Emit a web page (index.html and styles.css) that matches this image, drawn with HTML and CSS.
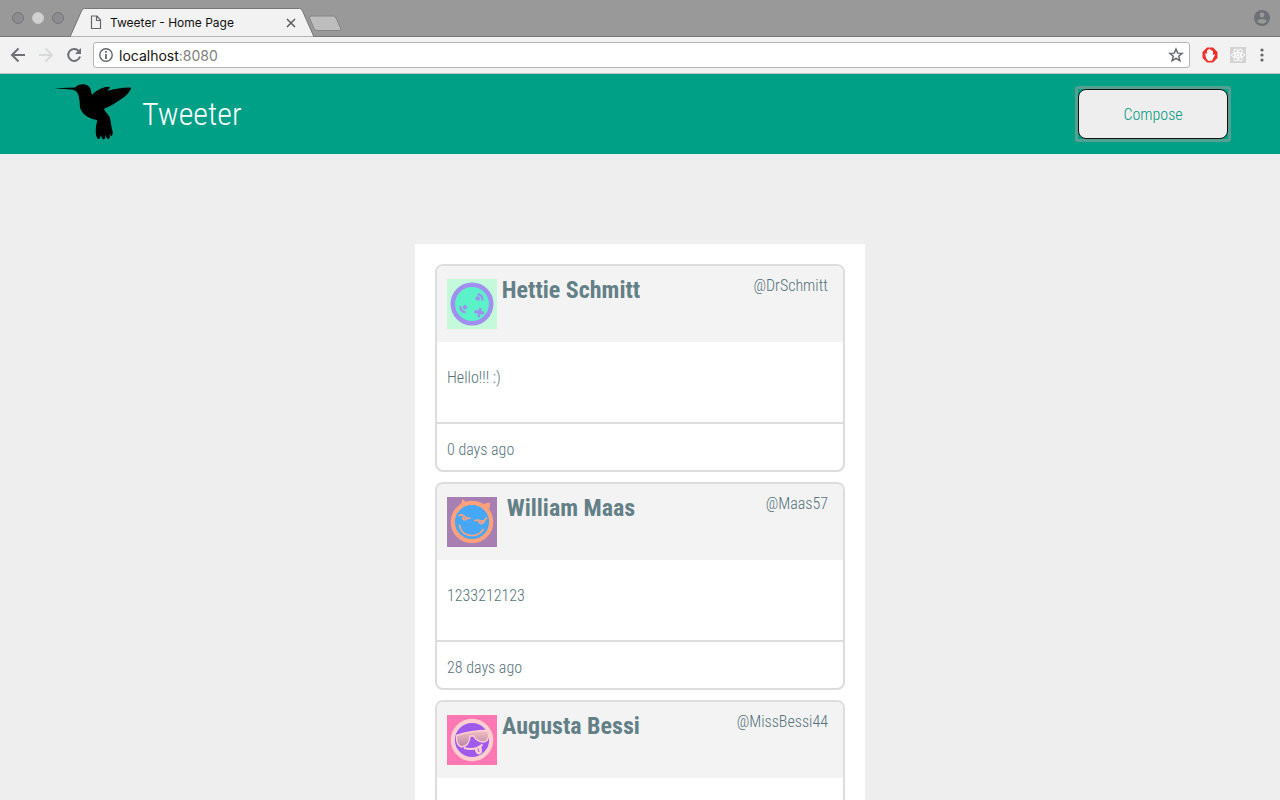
FILE: index.html
```html
<!DOCTYPE html>
<html lang="en">
<head>
<meta charset="utf-8">
<title>Tweeter - Home Page</title>
<link rel="stylesheet" href="styles.css">
</head>
<body>
<div class="tab-strip">
  <div class="window-dots"><i class="dot"></i><i class="dot dot-light"></i><i class="dot"></i></div>
  <div class="tab">
    <svg class="tab-shape" viewBox="0 0 244 29" preserveAspectRatio="none" aria-hidden="true"><path d="M0 29L11.500 3Q12.500 .5 14.500 .5H229.500Q231.500 .5 232.500 3L244 29Z" fill="#f2f2f2" stroke="#777"/></svg>
    <svg class="tab-file" width="12" height="15" viewBox="0 0 12 15" fill="none" stroke="#666" stroke-width="1.200" aria-hidden="true"><path d="M1.500 1H7L10.500 5V13.500H1.500ZM6.500 1V5.500H10.500"/></svg>
    <span class="tab-title">Tweeter - Home Page</span>
    <button class="icon-button" aria-label="Close tab"><svg width="10" height="10" viewBox="0 0 10 10" stroke="#5a5a5a" stroke-width="1.500"><path d="M1 1L9 9M9 1L1 9"/></svg></button>
  </div>
  <button class="icon-button new-tab" aria-label="New tab"><svg width="34" height="17" viewBox="0 0 34 17"><path d="M3 1H25Q27 1 28 3L32.500 13Q33.500 15.500 31.500 15.500H9Q7 15.500 6 13.500L1.500 3Q1 1 3 1Z" fill="#bdbdbd" stroke="#858585"/></svg></button>
  <button class="icon-button profile" aria-label="Profile"><svg width="16" height="16" viewBox="0 0 16 16"><circle cx="8" cy="8" r="8" fill="#6e7077"/><circle cx="8" cy="5" r="2.400" fill="#999"/><path d="M3.200 11.200C4.500 8.200 11.500 8.200 12.800 11.200C10.500 14.300 5.500 14.300 3.200 11.200Z" fill="#999"/></svg></button>
</div>
<div class="toolbar">
  <button class="icon-button" aria-label="Back"><svg width="16" height="16" viewBox="0 0 16 16" fill="none" stroke="#6e7077" stroke-width="2"><path d="M15 8H2.500M8.500 1.500L2 8L8.500 14.500"/></svg></button>
  <button class="icon-button" aria-label="Forward"><svg width="16" height="16" viewBox="0 0 16 16" fill="none" stroke="#d9dadd" stroke-width="2"><path d="M1 8H13.500M7.500 1.500L14 8L7.500 14.500"/></svg></button>
  <button class="icon-button" aria-label="Reload"><svg width="16" height="16" viewBox="0 0 16 16"><path d="M12.600 3.800A6 6 0 1 0 14 9.500" fill="none" stroke="#6e7077" stroke-width="2"/><path d="M15 1V7H9Z" fill="#6e7077"/></svg></button>
  <div class="address">
    <svg width="14" height="14" viewBox="0 0 14 14" fill="none" stroke="#63656b" aria-hidden="true"><circle cx="7" cy="7" r="6.200" stroke-width="1.400"/><path d="M7 6V11M7 3V4.800" stroke-width="1.800"/></svg>
    <span class="url">localhost<span class="port">:8080</span></span>
    <button class="icon-button" aria-label="Bookmark this page"><svg width="16" height="16" viewBox="0 0 16 16" fill="none" stroke="#63656b" stroke-width="1.400"><path d="M8 2L9.700 6.100L14.200 6.400L10.700 9.300L11.900 13.700L8 11.300L4.100 13.700L5.300 9.300L1.800 6.400L6.300 6.100Z"/></svg></button>
  </div>
  <div class="extensions">
    <button class="icon-button" aria-label="Ad blocker"><svg width="16" height="16" viewBox="0 0 16 16"><path d="M5 .5H11L15.500 5V11L11 15.500H5L.5 11V5Z" fill="#f0302c"/><path d="M3.300 7Q3.500 6 4.300 6L5.100 7.500V3.400Q5.700 2.400 6.400 3.400V2.200Q7.200 1.300 7.900 2.200V3Q8.700 2 9.400 3V4Q10.200 3.200 10.900 4V8.500L12 7.300Q13.200 7 12.700 8.200L10 13.800H6Q3.700 11.500 3.600 9Z" fill="#fff"/></svg></button>
    <button class="icon-button" aria-label="React tools"><svg width="16" height="16" viewBox="0 0 16 16" fill="none" stroke="#fff"><rect width="16" height="16" fill="#d3d3d3" stroke="none"/><ellipse cx="8" cy="8" rx="6.500" ry="2.500"/><ellipse cx="8" cy="8" rx="6.500" ry="2.500" transform="rotate(60 8 8)"/><ellipse cx="8" cy="8" rx="6.500" ry="2.500" transform="rotate(120 8 8)"/><circle cx="8" cy="8" r="1" fill="#fff"/></svg></button>
    <button class="icon-button menu" aria-label="Menu"><svg width="4" height="14" viewBox="0 0 4 14" fill="#63656b"><circle cx="2" cy="2" r="1.600"/><circle cx="2" cy="7" r="1.600"/><circle cx="2" cy="12" r="1.600"/></svg></button>
  </div>
</div>
<div class="page">
  <header class="nav">
    <svg class="bird" width="78" height="56" viewBox="0 0 78 56" aria-hidden="true"><path d="M0 4.200L21 3.600C23 1.500 25.500 .3 28.700 .3C32 .3 35 1.500 36.200 4.200C37.200 6.500 37 9 38.200 10.800C40 8.500 43 6.500 46 5C49 3.500 52 2.800 55.500 2.800L55.800 4L53.300 6.800C61 5 69 3.300 76.700 3.500L77 5L74.300 9C71 13 67 15.500 62.700 18C59 21 54.500 22.500 50 24.700C51 28.500 55 30.500 56 34C57 39 57.500 44 58.900 48.500L58 52L56.500 51.500L55.500 49.500L56 53.500L54.500 55.200L52.700 54L51.500 51L51 54.500L49.500 55.500L47.800 54L47 51L45.500 55L43.500 54.500L42 51.500C41.500 46 41.700 42 43.300 36.700C42.500 35 40 35.800 37.700 34.700C33 33 29.500 30.500 27.700 27.300C25 23 26.200 19 25.300 15.700C24.800 12.500 24.500 10 22.700 8C21.500 6.500 20 5.800 17 5.400Z"/></svg>
    <h1 class="brand">Tweeter</h1>
    <div class="focus-ring"><button class="compose">Compose</button></div>
  </header>
  <main class="timeline">
    <article class="tweet">
      <header class="tweet-head">
        <svg class="avatar" viewBox="0 0 50 50" aria-hidden="true"><rect width="50" height="50" fill="#c5f9dc"/><circle cx="25" cy="25" r="19.200" fill="#5bf1c9" stroke="#a08fee" stroke-width="4.500"/><g fill="none" stroke="#a08fee"><circle cx="30.800" cy="19.500" r="1.800" fill="#a08fee" stroke-width="1"/><path d="M30.500 15Q36 16 35.300 21.500" stroke-width="2.200"/><circle cx="18" cy="28.200" r="1.800" fill="#a08fee" stroke-width="1"/><path d="M13.300 27Q13 32.500 18.500 33.300" stroke-width="2.200"/><path d="M27.500 32.500L37 34M33.500 29L31.500 38" stroke-width="2.800"/></g></svg>
        <h2 class="name">Hettie Schmitt</h2>
        <span class="handle">@DrSchmitt</span>
      </header>
      <p class="message">Hello!!! :)</p>
      <footer class="age">0 days ago</footer>
    </article>
    <article class="tweet">
      <header class="tweet-head">
        <svg class="avatar" viewBox="0 0 50 50" aria-hidden="true"><rect width="50" height="50" fill="#a77fb3"/><path d="M14 7.500L15.500 2L20 6ZM36 7L43 5.500L42.500 12Z" fill="#ffa27b"/><circle cx="25" cy="25" r="19.200" fill="#46a7f7" stroke="#ffa27b" stroke-width="4.200"/><g fill="none" stroke="#ffa27b" stroke-width="1.700" stroke-linecap="round"><path d="M12 18.500Q15.500 17 17.500 19.500Q19.500 22 23 21M28 23.500Q31.500 22.500 33.500 24Q37 25 39.500 21M12.500 28C14 40.500 31 41.500 36 32.500"/><path d="M15.500 20.500Q16.500 24 19.500 22M32 25Q34.500 28.500 37 24.500"/></g></svg>
        <h2 class="name">William Maas</h2>
        <span class="handle">@Maas57</span>
      </header>
      <p class="message">1233212123</p>
      <footer class="age">28 days ago</footer>
    </article>
    <article class="tweet">
      <header class="tweet-head">
        <svg class="avatar" viewBox="0 0 50 50" aria-hidden="true"><defs><linearGradient id="lens" x2="0" y2="1"><stop stop-color="#f3bfc2"/><stop offset="1" stop-color="#b985a8"/></linearGradient></defs><rect width="50" height="50" fill="#ff78b4"/><circle cx="25" cy="25" r="19.200" fill="#9e5aed" stroke="#ffcfd0" stroke-width="4.200"/><path d="M9.500 20.500Q24 15.500 40.500 15.500Q43 21 40 25.500C36 29 29 26 26.500 21H23C23 27 20 31.500 14.500 32Q9 30 9.500 20.500Z" fill="url(#lens)" stroke="#ffcfd0" stroke-width="1.400"/><path d="M17 33Q28 36 35.500 29.500" fill="none" stroke="#ffcfd0" stroke-width="2"/><path d="M28 34V36Q31 42 35 37.500L34.500 31Z" fill="#ffcfd0"/><path d="M31 33.500L32 37" stroke="#9e5aed"/></svg>
        <h2 class="name">Augusta Bessi</h2>
        <span class="handle">@MissBessi44</span>
      </header>
      <p class="message"></p>
    </article>
  </main>
</div>
</body>
</html>
```
FILE: styles.css
```css
* { box-sizing: border-box; }
body {
  margin: 0;
  height: 100vh;
  display: flex;
  flex-direction: column;
  font-family: "Roboto Condensed", Roboto, sans-serif;
  font-size: 16px;
  font-weight: 300;
  color: #55727a;
  background: #eee;
}
svg { display: block; flex: none; }
.icon-button { display: block; flex: none; padding: 0; border: 0; background: none; }

.tab-strip {
  flex: none;
  display: flex;
  align-items: center;
  height: 37px;
  padding: 0 10px 0 12px;
  background: #999;
  border-bottom: 1px solid #777;
  font-family: Inter, sans-serif;
}
.window-dots { display: flex; gap: 8px; margin-right: 6px; }
.dot { width: 12px; height: 12px; border-radius: 50%; background: #8b8b90; border: 1px solid #76767b; }
.dot-light { background: #d1d1d1; border-color: #c9c9c9; }
.tab {
  position: relative;
  align-self: flex-end;
  display: flex;
  align-items: center;
  width: 244px;
  height: 29px;
  padding: 0 18px 0 20px;
  margin-bottom: -1px;
}
.tab-shape { position: absolute; inset: 0; width: 100%; height: 100%; }
.tab-file, .tab-title, .tab .icon-button { position: relative; }
.tab-title { flex: 1; margin-left: 8px; font-size: 12px; font-weight: 400; color: #111; }
.new-tab { margin: 10px 0 0 -6px; }
.profile { margin-left: auto; }

.toolbar {
  flex: none;
  display: flex;
  align-items: center;
  gap: 12px;
  height: 37px;
  padding: 0 16px 0 10px;
  background: #f2f2f2;
  border-bottom: 1px solid #c4c4c4;
}
.address {
  flex: 1;
  display: flex;
  align-items: center;
  height: 26px;
  margin-left: -1px;
  padding: 0 5px;
  border: 1px solid #b5b5b5;
  border-radius: 3px;
  background: #fff;
}
.url { flex: 1; margin-left: 6px; font: 400 14px Inter, sans-serif; color: #111; }
.port { color: #808080; }
.extensions { display: flex; align-items: center; gap: 12px; }
.menu { margin-left: 2px; }

.page { flex: 1; min-height: 0; overflow-y: auto; scrollbar-width: none; }
.nav {
  display: flex;
  align-items: center;
  height: 80px;
  padding: 0 49px 0 54px;
  background: #00a087;
}
.bird { align-self: flex-start; margin-top: 10px; }
.brand { margin: 0 auto 0 10px; font-size: 32px; font-weight: 300; color: #fff; }
.focus-ring { display: flex; border: 3px solid #569f93; border-radius: 3px; }
.compose {
  width: 150px;
  height: 50px;
  border: 1px solid #111;
  border-radius: 8px;
  background: #eee;
  color: #009880;
  font: inherit;
}
.timeline {
  display: flex;
  flex-direction: column;
  gap: 10px;
  max-width: 450px;
  margin: 90px auto 0;
  padding: 20px;
  background: #fff;
}
.tweet { border: 2px solid #ddd; border-radius: 8px; overflow: hidden; }
.tweet-head {
  display: flex;
  align-items: flex-start;
  height: 76px;
  padding: 10px 15px 0 10px;
  background: #f3f3f3;
}
.avatar { width: 50px; height: 50px; margin-top: 3px; }
.name { width: 148px; margin: 0; font-size: 24px; line-height: 28px; font-weight: 700; color: #648087; text-align: center; white-space: nowrap; }
.handle { margin-left: auto; line-height: 20px; }
.message { height: 80px; margin: 0; padding: 26px 10px; line-height: 20px; }
.age { height: 48px; padding: 16px 10px; border-top: 2px solid #ddd; line-height: 20px; }
```
